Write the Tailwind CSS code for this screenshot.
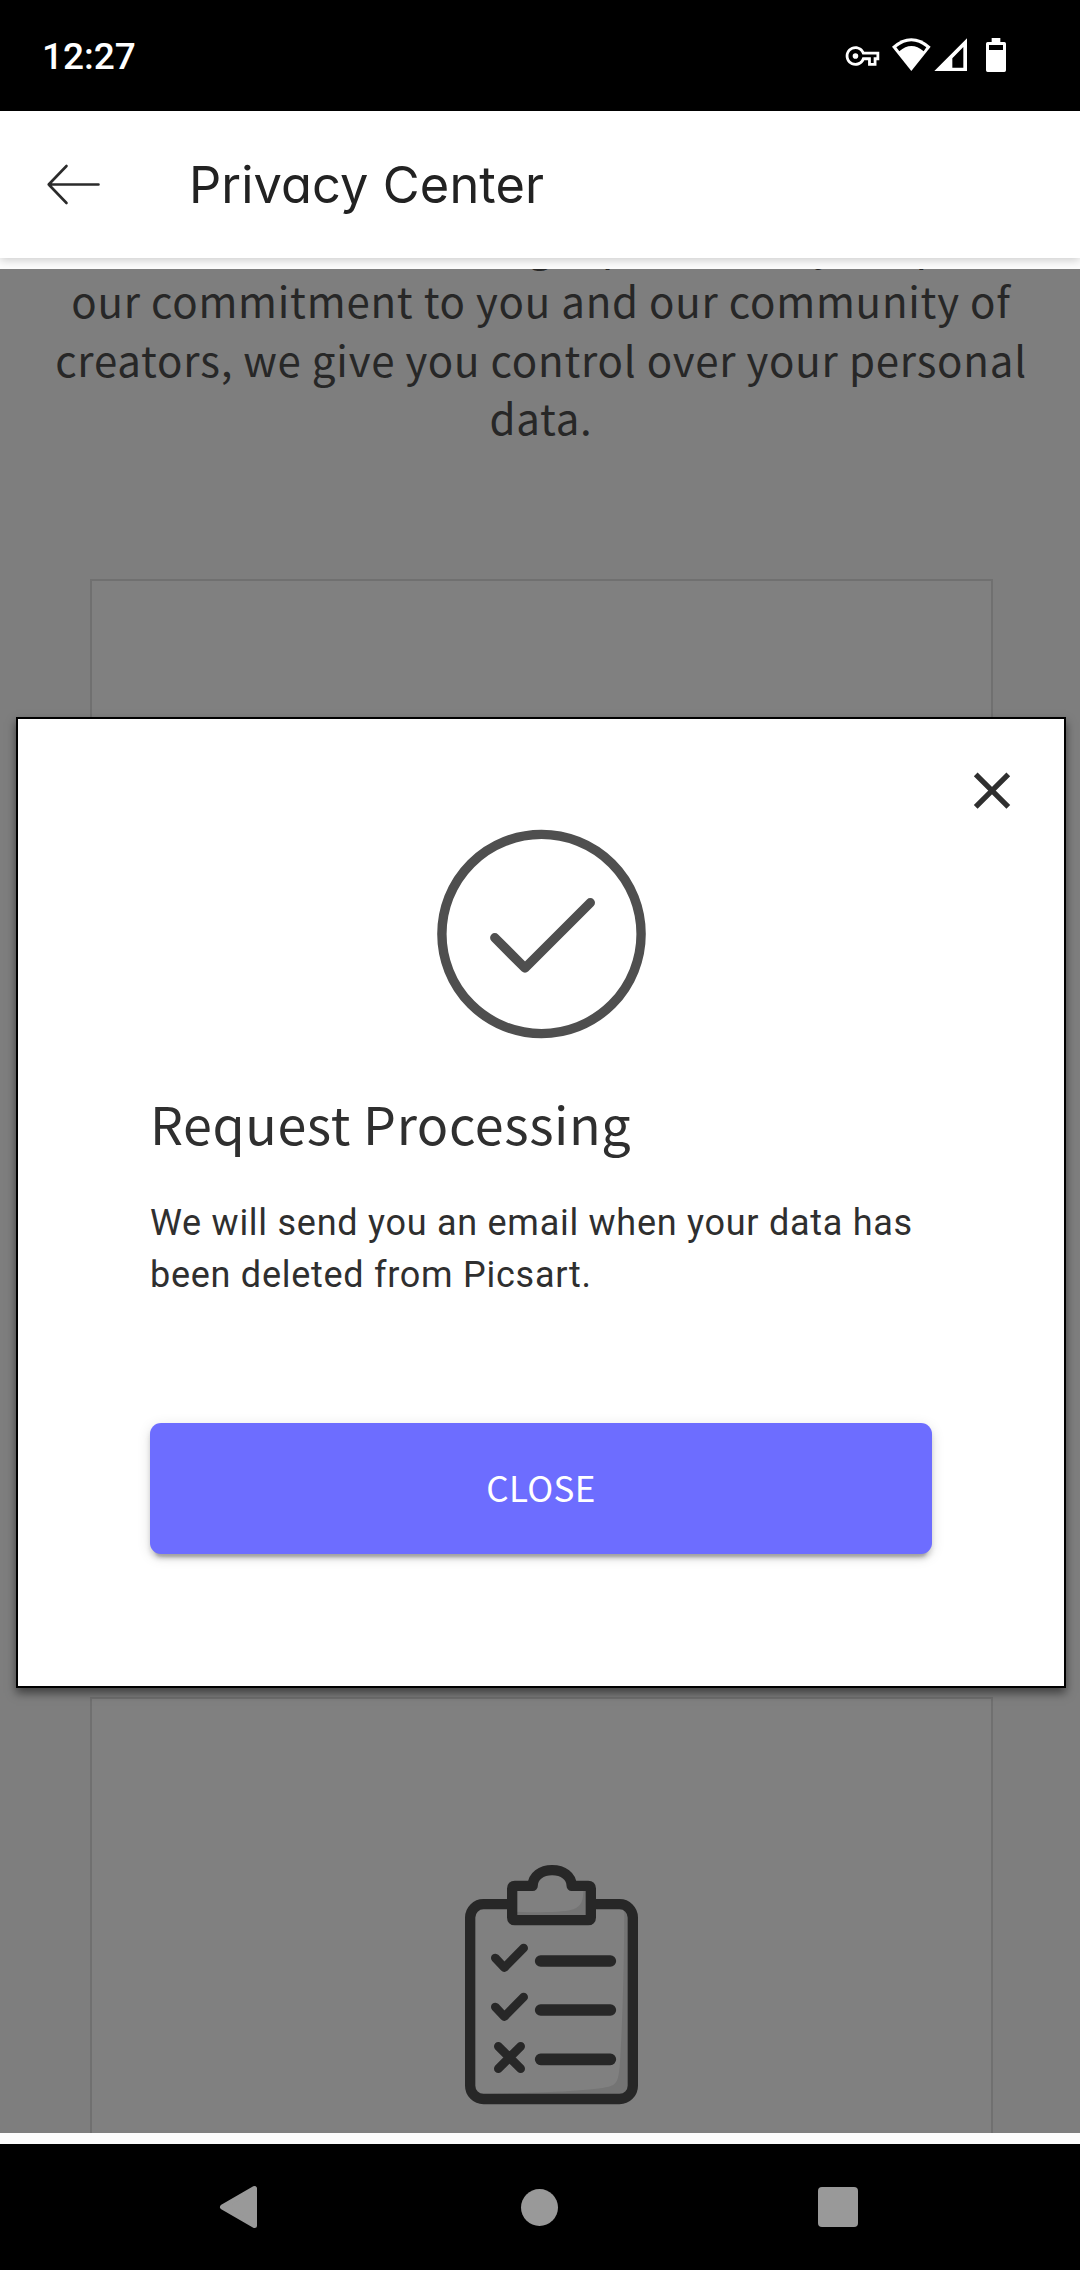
<!DOCTYPE html>
<html lang="en">
<head>
<meta charset="utf-8">
<title>Privacy Center</title>
<script src="https://cdn.jsdelivr.net/npm/@tailwindcss/browser@4"></script>
</head>
<body class="w-[1080px] h-[2270px] overflow-hidden bg-black flex flex-col font-['Noto_Sans_CJK_SC',sans-serif]">
  <!-- Status bar -->
  <div class="h-[111px] shrink-0 bg-black flex items-start justify-between pl-[42px] pr-10 text-white">
    <span class="mt-[38px] font-['Roboto',sans-serif] font-medium text-[37px] leading-[38px]">12:27</span>
    <svg class="mt-5 w-[220px] h-20" viewBox="0 0 660 240" fill="#fff">
      <g transform="translate(77 57.500) scale(4.200)"><path d="M22 19h-6v-4h-2.680c-1.140 2.420-3.600 4-6.320 4-3.860 0-7-3.140-7-7s3.140-7 7-7c2.720 0 5.170 1.580 6.320 4H24v6h-2v4zm-4-2h2v-4h2v-2H11.940l-.23-.67C11.010 8.340 9.110 7 7 7c-2.760 0-5 2.240-5 5s2.240 5 5 5c2.110 0 4.010-1.340 4.710-3.330l.23-.67H18v4zM7 14a2 2 0 1 0 0-4a2 2 0 0 0 0 4z"/></g>
      <path d="M274 153L216 80Q274 30 332 80Z"/>
      <path fill="#000" d="M229 82Q274 45 319 82L311 94Q274 62 238 94Z"/>
      <path fill-rule="evenodd" d="M343 153L441 55V153ZM397 115V143H430V81Z"/>
      <path fill-rule="evenodd" d="M515 54H541V66H553Q558 66 558 71V151Q558 156 553 156H503Q498 156 498 151V71Q498 66 503 66H515ZM507 75V90H549V75Z"/>
    </svg>
  </div>

  <!-- App bar -->
  <header class="relative z-10 h-[147px] shrink-0 bg-white flex items-center pl-[45px] shadow-[0_2px_9px_rgba(0,0,0,0.2)]">
    <svg class="w-[56px] h-[44px]" viewBox="0 0 56 44" fill="none" stroke="#2b2b2b" stroke-width="2.600" stroke-linecap="round" stroke-linejoin="round"><path d="M21.500 3L3.700 21.500L21.500 40M3.700 21.500H53.500"/></svg>
    <h1 class="ml-[88px] mt-0.5 font-['Inter',sans-serif] [font-feature-settings:'cv11'] text-[50.5px] tracking-[0.1px] leading-none text-[#222]">Privacy Center</h1>
  </header>

  <!-- Scrolled web page under the dialog backdrop -->
  <main class="h-[1886px] shrink-0 bg-[#fcfcfc] py-[11px]">
    <div class="relative h-full bg-[#7e7e7e] overflow-hidden flex flex-col items-center">
      <p class="-mt-[56px] ml-[2px] shrink-0 text-center whitespace-nowrap text-[42px] leading-[58.4px] tracking-[0.78px] text-[#272727]">and we consider handling it particularly. As part of<br>our commitment to you and our community of<br>creators, we give you control over your personal<br>data.</p>
      <section class="mt-[132px] ml-[3px] h-[1076px] w-[903px] shrink-0 border-2 border-[#707070] bg-[#808080]"></section>
      <section class="mt-[42px] ml-[3px] h-[700px] w-[903px] shrink-0 border-2 border-[#707070] bg-[#808080]">
        <svg class="mt-[141px] ml-[348px] w-[220px] h-[290px]" viewBox="0 0 660 870" fill="none" stroke="#272727">
          <path stroke="none" fill="#747474" d="M150 762C350 757 480 750 512 738C530 732 535 720 539 680C547 560 552 400 553 205L564 215V762Z"/>
          <rect x="90.500" y="192.500" width="488" height="584.500" rx="40" stroke-width="31"/>
          <path stroke="none" fill="#808080" d="M216 137H278C290 80 380 80 395 137H452V240H216Z"/>
          <path stroke="none" fill="#747474" d="M228 215C330 219 380 215 400 208C425 198 430 180 430 150H440V230H228Z"/>
          <path stroke-width="31" stroke-linejoin="round" d="M224.500 137.500H278C278 108 304 90.500 336.500 90.500S395 108 395 137.500H444.500Q452.500 137.500 452.500 145.500V232.500Q452.500 240.500 444.500 240.500H224.500Q216.500 240.500 216.500 232.500V145.500Q216.500 137.500 224.500 137.500Z"/>
          <g stroke-width="26" stroke-linecap="round" stroke-linejoin="round">
            <path d="M166 354L193 383L251 324M166 501L193 530L251 471M175 619L242 686M242 619L175 686"/>
            <path stroke-width="35" d="M302 363H511M302 510H511M302 658H511"/>
          </g>
        </svg>
      </section>

      <!-- Dialog -->
      <div class="absolute left-4 top-[448px] w-[1050px] h-[971px] border-2 border-black bg-white text-[#2f2f2f] shadow-[0_5px_9px_rgba(0,0,0,0.5)]">
        <div class="flex justify-end pt-[51px] pr-[52px]">
          <svg class="w-10 h-10" viewBox="0 0 40 40" stroke="#2f2f2f" stroke-width="5.300"><path d="M3.700 4.300L36.300 36.900M36.300 4.300L3.700 36.900"/></svg>
        </div>
        <div class="flex flex-col pl-[132px] pr-[132px] pt-[18px]">
          <svg class="self-center w-[212px] h-[212px]" viewBox="-106 -106 212 212" fill="none" stroke="#4f4f4f" stroke-width="9.400" stroke-linecap="round" stroke-linejoin="round"><circle cx="0.500" cy="0" r="99.600"/><path d="M-46.200 3.800L-16 34L49.300 -31.300"/></svg>
          <h2 class="mt-[45px] text-[52px] leading-[76px] tracking-[0.6px]">Request Processing</h2>
          <p class="mt-[36px] font-['Roboto',sans-serif] text-[36px] leading-[52px] tracking-[0.73px]">We will send you an email when your data has<br>been deleted from Picsart.</p>
          <button class="mt-[122px] h-[131px] rounded-[11px] bg-[#6d6dff] pb-0.5 text-white text-[35px] tracking-[0.3px] shadow-[0_8px_3px_-5px_rgba(0,0,0,0.2),0_5px_5px_0_rgba(0,0,0,0.14),0_3px_14px_0_rgba(0,0,0,0.12)]">CLOSE</button>
        </div>
      </div>
    </div>
  </main>

  <!-- Navigation bar -->
  <nav class="h-[126px] shrink-0 bg-black flex items-center justify-between pl-[219px] pr-[222px]">
    <svg class="w-[39px] h-[44px]" viewBox="0 0 39 44" fill="#999" stroke="#999" stroke-width="5" stroke-linejoin="round"><path d="M3.500 22L35.500 3.500V40.500Z"/></svg>
    <span class="ml-[2px] size-[37px] rounded-full bg-[#999]"></span>
    <span class="size-10 rounded-[4px] bg-[#999]"></span>
  </nav>
</body>
</html>
